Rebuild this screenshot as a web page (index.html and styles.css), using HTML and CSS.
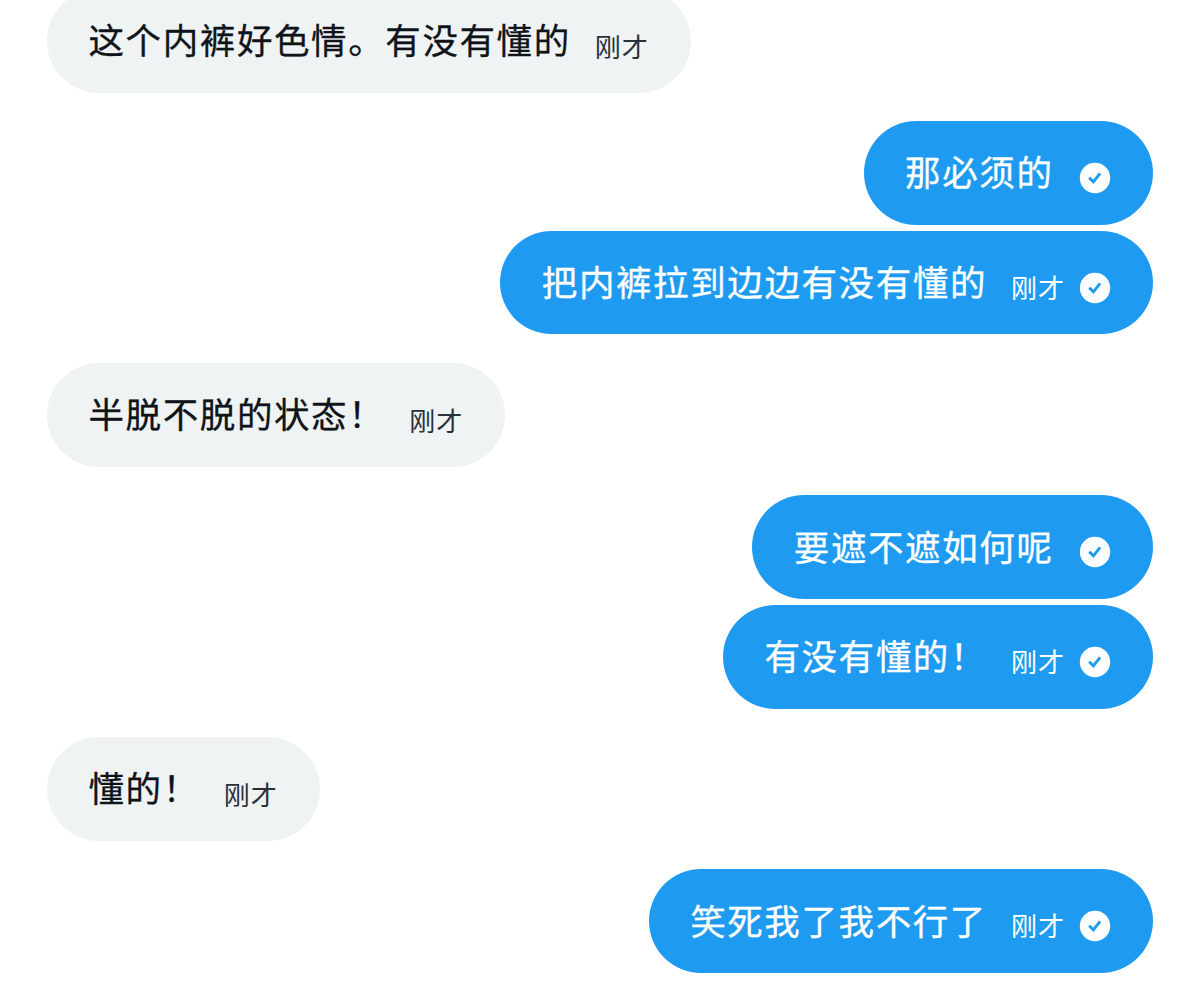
FILE: index.html
```html
<!DOCTYPE html>
<html lang="zh-CN">
<head>
    <meta charset="UTF-8">
    <meta name="viewport" content="width=device-width, initial-scale=1.0">
    <title>私信</title>
    <link rel="stylesheet" href="styles.css">
</head>
<body>
    <svg class="symbols" width="0" height="0">
        <symbol id="check" viewBox="0 0 32 32">
            <circle cx="16" cy="16" r="15.2" fill="#fff"/>
            <path d="M10.2 15.8l4.2 4.1 6.7-8.5" fill="none" stroke="#1e9bf0" stroke-width="2.9"/>
        </symbol>
    </svg>
    <div class="chat">
        <div class="group received">
            <div class="bubble"><span class="text">这个内裤好色情。有没有懂的</span><span class="time">刚才</span></div>
        </div>
        <div class="group sent">
            <div class="bubble"><span class="text">那必须的</span><svg class="check"><use href="#check"/></svg></div>
            <div class="bubble"><span class="text">把内裤拉到边边有没有懂的</span><span class="time">刚才</span><svg class="check"><use href="#check"/></svg></div>
        </div>
        <div class="group received">
            <div class="bubble"><span class="text">半脱不脱的状态！</span><span class="time">刚才</span></div>
        </div>
        <div class="group sent">
            <div class="bubble"><span class="text">要遮不遮如何呢</span><svg class="check"><use href="#check"/></svg></div>
            <div class="bubble"><span class="text">有没有懂的！</span><span class="time">刚才</span><svg class="check"><use href="#check"/></svg></div>
        </div>
        <div class="group received">
            <div class="bubble"><span class="text">懂的！</span><span class="time">刚才</span></div>
        </div>
        <div class="group sent">
            <div class="bubble"><span class="text">笑死我了我不行了</span><span class="time">刚才</span><svg class="check"><use href="#check"/></svg></div>
        </div>
    </div>
</body>
</html>
```
FILE: styles.css
```css
* {
    margin: 0;
    padding: 0;
    box-sizing: border-box;
}

body {
    height: 985px;
    background: #fff;
    font-family: "Noto Sans CJK SC", sans-serif;
    overflow: hidden;
}

.symbols {
    display: block;
}

.chat {
    display: flex;
    flex-direction: column;
    gap: 28.6px;
    margin-top: -11.2px;
    padding: 0 47px;
}

.group {
    display: flex;
    flex-direction: column;
    gap: 5.9px;
}

.received {
    align-items: flex-start;
}

.sent {
    align-items: flex-end;
}

.bubble {
    display: flex;
    align-items: center;
    height: 103.7px;
    padding: 0 42px;
    border-radius: 52px;
    background: #eff3f4;
    color: #0f1419;
    white-space: nowrap;
}

.sent .bubble {
    padding-right: 42px;
    background: #1e9bf0;
    color: #fff;
}

.text {
    font-size: 35.5px;
    line-height: 54px;
    letter-spacing: 1.6px;
    margin-left: -0.5px;
    margin-right: 24px;
    padding-bottom: 3px;
    -webkit-text-stroke: 0.3px currentColor;
}

.time {
    font-size: 26px;
    line-height: 40px;
    letter-spacing: 1px;
    padding-top: 10px;
}

.received .time {
    color: #27313a;
}

.sent .time {
    padding-top: 8px;
}

.check {
    width: 32px;
    height: 32px;
    margin-top: 10px;
    margin-left: 1.5px;
}

.time + .check {
    margin-left: 14px;
}
```
